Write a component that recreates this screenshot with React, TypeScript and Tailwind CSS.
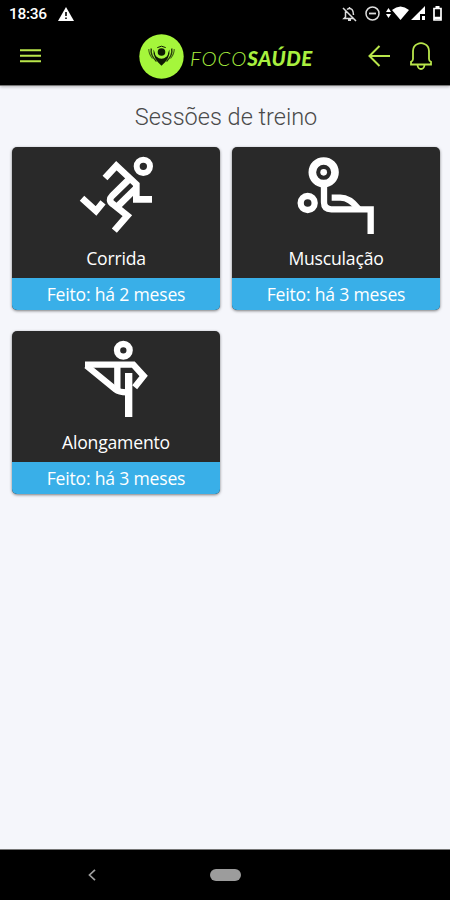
import type { ReactNode } from "react";

type Session = {
  id: string;
  title: string;
  done: string;
  icon: ReactNode;
};

const sessions: Session[] = [
  { id: "run", title: "Corrida", done: "Feito: há 2 meses", icon: <RunIcon /> },
  { id: "gym", title: "Musculação", done: "Feito: há 3 meses", icon: <BenchIcon /> },
  { id: "stretch", title: "Alongamento", done: "Feito: há 3 meses", icon: <StretchIcon /> },
];

function RunIcon() {
  return (
    <svg width="100" height="90" viewBox="-13 -3 300 270" fill="none" stroke="#fff" strokeWidth="20">
      <circle cx="219" cy="55" r="20" strokeWidth="18" />
      <path d="M104 90 138 53 198 109V154H245" />
      <path d="M174 96 126 143Q112 157 127 168L171 203 132 248" />
      <path d="M196 122 143 174" />
      <path d="M35 151 77 189 98 163" />
    </svg>
  );
}

function BenchIcon() {
  return (
    <svg width="100" height="90" viewBox="-13 -3 300 270" fill="none" stroke="#fff" strokeWidth="19">
      <circle cx="100" cy="73" r="34" strokeWidth="23" />
      <circle cx="100" cy="73" r="10" fill="#fff" stroke="none" />
      <circle cx="52" cy="165" r="21" />
      <path d="M101 112V163Q101 184 123 184H241V258" />
      <path d="M124 149H150Q178 149 204 182" />
    </svg>
  );
}

function StretchIcon() {
  return (
    <svg width="100" height="90" viewBox="-12 -3 300 270" fill="none" stroke="#fff" strokeWidth="19">
      <circle cx="160" cy="55" r="19" />
      <path d="M45 98H190L221 132 194 166" />
      <path d="M49 101 137 173Q148 182 176 181" />
      <path d="M142 100V174" />
      <path d="M176 123V255" strokeWidth="22" />
    </svg>
  );
}

function StatusBar() {
  return (
    <div className="flex h-[29px] items-center justify-between pl-[9px] pr-[8px] text-white">
      <div className="flex items-center">
        <span className="w-[49px] pt-px font-['Roboto',sans-serif] text-[15.5px] leading-none font-medium tracking-[-0.3px]">18:36</span>
        <svg className="mb-px" width="16" height="14" viewBox="0 0 16 14">
          <path d="M8 0 16 14H0Z" fill="#fff" />
          <path d="M8 5V9M8 10.5V12" stroke="#000" strokeWidth="1.6" />
        </svg>
      </div>
      <div className="mb-[2px] flex items-center">
        <svg className="mr-[8px]" width="15" height="16" viewBox="0 0 15 16" fill="none" stroke="#ddd" strokeWidth="1.5">
          <path d="M3.5 5.5V11L2 12.5H12M5 3.5Q7.5 1.5 10 3.5Q11.5 5 11.5 9M7.5 1V3M1 2 14 15" />
          <path d="M6 14H9" strokeWidth="2" />
        </svg>
        <svg className="mr-[6px]" width="15" height="15" viewBox="0 0 15 15" fill="none" stroke="#ddd" strokeWidth="1.5">
          <circle cx="7.5" cy="7.5" r="6.5" />
          <path d="M4 7.5H11" strokeWidth="1.8" />
        </svg>
        <svg className="mr-px" width="24" height="15" viewBox="0 0 24 15" fill="#fff">
          <path d="M0 6 2.5 2 5 6ZM0 8H5L2.5 12Z" />
          <path d="M6 4Q14.5-3 23 4L14.5 14Z" />
        </svg>
        <svg className="mr-[7px]" width="15" height="15" viewBox="0 0 15 15" fill="#fff">
          <path d="M14 0V8H9V14H0Z" />
          <path d="M11 10H14V14H11Z" />
        </svg>
        <svg width="9" height="15" viewBox="0 0 9 15" fill="none" stroke="#fff" strokeWidth="1.7">
          <path d="M1 2.5H8V14H1Z" />
          <path d="M2.5 1H6.5M1 12H8" strokeWidth="2.4" />
        </svg>
      </div>
    </div>
  );
}

function Logo() {
  return (
    <div className="flex items-center">
      <svg width="45" height="45" viewBox="0 0 45 45" fill="none">
        <circle cx="22.5" cy="22.5" r="22.2" fill="#a5f63b" />
        <path d="M14.5 15.5Q13.5 24 22.5 31.8Q31.5 24 30.5 15.5L27 23H18Z" fill="#101a04" />
        <circle cx="22.5" cy="18" r="5.3" fill="#101a04" stroke="#a5f63b" strokeWidth="3" />
        <path d="M18.3 13.6Q22.5 10.8 26.7 13.6" stroke="#101a04" strokeWidth="1" />
        <path d="M12.3 14.5Q11 21 17.5 27.5M32.7 14.5Q34 21 27.5 27.5" stroke="#24380b" strokeWidth="1.4" />
        <path d="M9.8 15Q9.5 19.5 13.5 24.5M35.2 15Q35.5 19.5 31.5 24.5" stroke="#406414" strokeWidth="1.1" />
      </svg>
      <p className="ml-[6px] flex pt-[4px] font-['Lato',sans-serif] text-[20.5px] leading-none text-[#a9f03f] italic">
        <span className="font-light tracking-[0.9px]">FOCO</span>
        <span className="font-black tracking-[0.5px]">SAÚDE</span>
      </p>
    </div>
  );
}

function Header() {
  return (
    <header className="h-[86px] shrink-0 border-b border-[#777] bg-black shadow-[0_1px_3px_rgba(0,0,0,0.25)]">
      <StatusBar />
      <div className="flex h-[54px] items-center pr-[18px] pl-[20px]">
        <button className="mr-[98px]">
          <svg width="21" height="16" viewBox="0 0 21 16" stroke="#b9e64b" strokeWidth="2">
            <path d="M0 2.2H21M0 7.8H21M0 13.2H21" />
          </svg>
        </button>
        <Logo />
        <div className="ml-auto flex items-center gap-5">
          <svg width="22" height="22" viewBox="0 0 22 22" fill="none" stroke="#b9e64b" strokeWidth="2">
            <path d="M22 11H1.5M11.5 1 1.5 11 11.5 21" />
          </svg>
          <svg width="22" height="28" viewBox="0 0 22 28" fill="none" stroke="#b9e64b" strokeWidth="1.8">
            <path d="M3 17V9Q3 4 7.5 2Q11 .3 14.5 2Q19 4 19 9V17Q19 19 21 19.8V22.5H1V19.8Q3 19 3 17Z" />
            <path d="M7.5 23Q8 27 11 27Q14 27 14.5 23" />
          </svg>
        </div>
      </div>
    </header>
  );
}

function SessionCard({ session }: { session: Session }) {
  return (
    <li className="flex h-[163px] flex-col overflow-hidden rounded-[5px] bg-[#292929] text-center font-['Open_Sans',sans-serif] text-[17.6px] tracking-[-0.2px] text-white shadow-[0_1px_3px_rgba(0,0,0,0.5)]">
      <div className="flex h-[131px] flex-col items-center">
        {session.icon}
        <h2 className="mt-[8px] leading-[26px]">{session.title}</h2>
      </div>
      <p className="h-8 bg-[#39afe8] leading-8">{session.done}</p>
    </li>
  );
}

function App() {
  return (
    <div className="flex h-[900px] w-[450px] flex-col overflow-hidden bg-[#f5f6fb]">
      <Header />

      <main className="flex-1 pr-[10px] pl-[12px]">
        <h1 className="h-[61px] pt-[15px] text-center font-['Roboto',sans-serif] text-[23.5px] leading-8 font-light text-[#4a4a4a]">
          Sessões de treino
        </h1>
        <ul className="grid grid-cols-2 gap-x-3 gap-y-[21px]">
          {sessions.map((s) => (
            <SessionCard key={s.id} session={s} />
          ))}
        </ul>
      </main>

      {/* Android navigation */}
      <nav className="flex h-[51px] shrink-0 items-center border-t border-[#777] bg-black pl-[88px]">
        <svg width="8" height="12" viewBox="0 0 8 12" fill="none" stroke="#a0a0a0" strokeWidth="1.7">
          <path d="M7 .8 1.5 6 7 11.2" />
        </svg>
        <span className="ml-[114px] h-3 w-[31px] rounded-full bg-[#9c9c9c]"></span>
      </nav>
    </div>
  );
}

export default App;
